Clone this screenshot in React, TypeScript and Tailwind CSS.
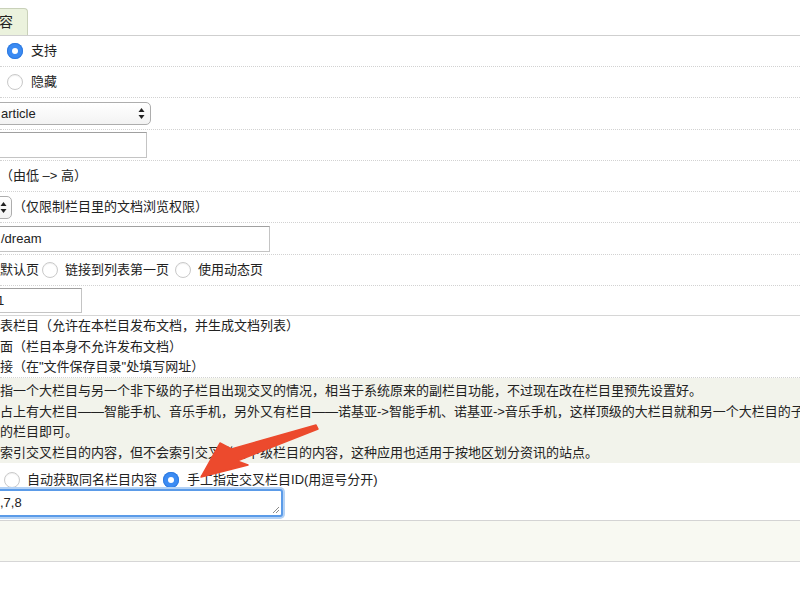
import React from "react";

const cjk = { fontFamily: '"Liberation Sans", "Noto Sans CJK SC", sans-serif' };

function Radio({ checked }: { checked?: boolean }) {
  return checked ? (
    <span className="flex h-4 w-4 shrink-0 items-center justify-center rounded-full bg-[#3b8bf3] shadow-[inset_0_0_0_1px_#2f7be0]">
      <span className="h-[6px] w-[6px] rounded-full bg-white" />
    </span>
  ) : (
    <span className="h-4 w-4 shrink-0 rounded-full border border-[#c9c9c9] bg-white shadow-[inset_0_1px_1px_rgba(0,0,0,0.06)]" />
  );
}

function Stepper() {
  return (
    <svg width="7" height="13" viewBox="0 0 7 13" className="shrink-0">
      <path d="M3.5 1 L6.5 5 L0.5 5 Z" fill="#222" />
      <path d="M3.5 12 L6.5 8 L0.5 8 Z" fill="#222" />
    </svg>
  );
}

function Row({ h, children, solid }: { h: string; children?: React.ReactNode; solid?: boolean }) {
  return (
    <div
      className={`flex items-center whitespace-nowrap border-b ${h} ${
        solid ? "border-solid border-[#d6d6d6]" : "border-dotted border-[#d2d2d2]"
      }`}
    >
      {children}
    </div>
  );
}

export default function App() {
  return (
    <div
      className="relative h-[600px] w-[800px] overflow-hidden bg-white text-[13px] text-[#222]"
      style={cjk}
    >
      {/* tab strip */}
      <div className="flex h-[36px] items-end border-b border-[#cfcfcf]">
        <div className="-ml-[20px] flex h-[27px] w-[48px] items-center justify-end rounded-tr-[4px] border border-b-0 border-[#c9d1b9] bg-[#ebf2dd] pr-[14px] text-[14px]">
          内容
        </div>
      </div>

      <Row h="h-[31px]">
        <div className="flex items-center gap-[8px] pl-[7px]">
          <Radio checked />
          <span>支持</span>
        </div>
      </Row>
      <Row h="h-[31px]">
        <div className="flex items-center gap-[8px] pl-[7px]">
          <Radio />
          <span>隐藏</span>
        </div>
      </Row>
      <Row h="h-[32px]">
        <div className="-ml-[10px] flex h-[23px] w-[161px] items-center justify-between rounded-[5px] border border-[#adadad] bg-gradient-to-b from-white to-[#f3f3f3] pl-[10px] pr-[5px]">
          <span>article</span>
          <Stepper />
        </div>
      </Row>
      <Row h="h-[31px]">
        <div className="-ml-[10px] h-[26px] w-[157px] border border-[#c4c4c4] border-t-[#a0a0a0] bg-white" />
      </Row>
      <Row h="h-[31px]">
        <span>（由低 –&gt; 高）</span>
      </Row>
      <Row h="h-[31px]">
        <div className="-ml-[30px] flex h-[23px] w-[42px] items-center justify-end rounded-[5px] border border-[#adadad] bg-gradient-to-b from-white to-[#f3f3f3] pr-[4px]">
          <Stepper />
        </div>
        <span className="ml-[1px]">（仅限制栏目里的文档浏览权限）</span>
      </Row>
      <Row h="h-[32px]">
        <div className="-ml-[10px] flex h-[26px] w-[280px] items-center border border-[#c4c4c4] border-t-[#a0a0a0] bg-white pl-[10px]">
          /dream
        </div>
      </Row>
      <Row h="h-[31px]">
        <div className="flex items-center">
          <span>默认页</span>
          <span className="ml-[3px]" />
          <Radio />
          <span className="ml-[7px]">链接到列表第一页</span>
          <span className="ml-[6px]" />
          <Radio />
          <span className="ml-[7px]">使用动态页</span>
        </div>
      </Row>
      <Row h="h-[30px]" solid>
        <div className="-ml-[10px] flex h-[25px] w-[92px] items-center border border-[#c4c4c4] border-t-[#a0a0a0] bg-white pl-[6px]">
          1
        </div>
      </Row>

      {/* column type options */}
      <div className="h-[62px] whitespace-nowrap border-b border-dotted border-[#d2d2d2] leading-[20.5px]">
        <div>表栏目（允许在本栏目发布文档，并生成文档列表）</div>
        <div>面（栏目本身不允许发布文档）</div>
        <div>接（在"文件保存目录"处填写网址）</div>
      </div>

      {/* cross column description */}
      <div className="h-[85px] whitespace-nowrap bg-[#f2f3eb] pt-[3px] leading-[20.5px]">
        <div>指一个大栏目与另一个非下级的子栏目出现交叉的情况，相当于系统原来的副栏目功能，不过现在改在栏目里预先设置好。</div>
        <div>占上有大栏目——智能手机、音乐手机，另外又有栏目——诺基亚-&gt;智能手机、诺基亚-&gt;音乐手机，这样顶级的大栏目就和另一个大栏目的子栏目交叉了</div>
        <div>的栏目即可。</div>
        <div>索引交叉栏目的内容，但不会索引交叉栏目下级栏目的内容，这种应用也适用于按地区划分资讯的站点。</div>
      </div>

      <div className="h-[58px] border-b border-[#d4d4d4] pt-[8px]">
        <div className="flex h-[18px] items-center whitespace-nowrap pl-[4px]">
          <Radio />
          <span className="ml-[7px]">自动获取同名栏目内容</span>
          <span className="ml-[6px]" />
          <Radio checked />
          <span className="ml-[8px]">手工指定交叉栏目ID(用逗号分开)</span>
        </div>
        <div className="relative -ml-[6px] flex h-[28px] w-[289px] items-center rounded-[3px] border-2 border-[#5b9be8] bg-white pl-[4px] shadow-[0_0_0_2px_#b4d2f5]">
          ,7,8
          <svg width="8" height="8" viewBox="0 0 8 8" className="absolute bottom-[1px] right-[1px]">
            <path d="M7 1 L1 7 M7 4 L4 7" stroke="#8a8a8a" strokeWidth="1" />
          </svg>
        </div>
      </div>

      <div className="h-[41px] border-b border-[#d6d6d6] bg-[#f8f9f2]" />

      {/* annotation arrow */}
      <svg className="pointer-events-none absolute left-0 top-0" width="800" height="600" viewBox="0 0 800 600">
        <path
          d="M201 477 L248 465 L237 461 L318 429 L316 425 L231.5 449 L220 443 Z"
          fill="#ec4a2d"
          stroke="#ec4a2d"
          strokeWidth="1.5"
          strokeLinejoin="round"
        />
      </svg>
    </div>
  );
}
